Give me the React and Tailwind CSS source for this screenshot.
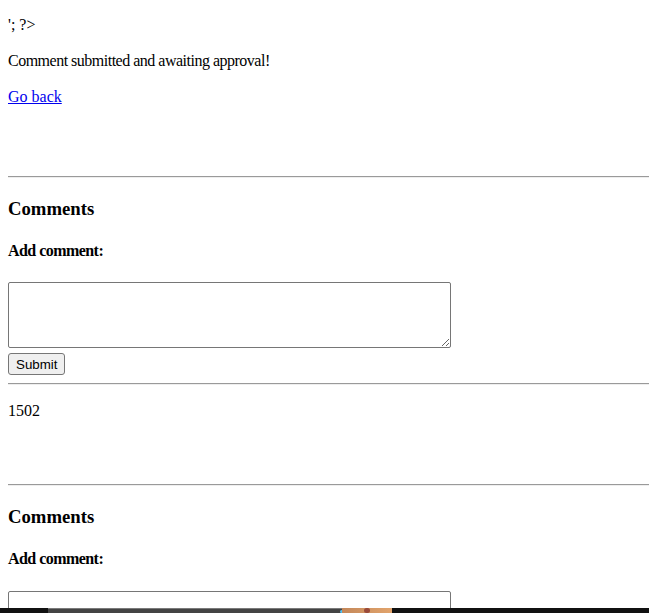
import React from 'react';

// Comment block: heading, form and the rule under it
const CommentSection = () => (
  <div>
    <hr className="my-2 h-0 border-0 border-t border-b border-t-[#9a9a9a] border-b-[#eeeeee]" />
    <h3 className="my-[18.72px] text-[18.72px] font-bold leading-[23px]">Comments</h3>
    <h4 className="my-[21.28px] text-[16px] font-bold leading-[20px] tracking-[-0.55px]">Add comment:</h4>
    <form>
      <textarea
        name="comment"
        className="block w-[443px] h-[66px] border border-[#767676] rounded-[2px] bg-white p-[2px] font-['Liberation_Mono',monospace] text-[13.33px]"
      />
      <div className="pt-[5px]">
        <button
          type="submit"
          className="block h-[22px] px-[7px] bg-[#efefef] border border-[#767676] rounded-[3px] font-['Liberation_Sans',Arial,sans-serif] text-[13.33px] leading-[normal] text-black"
        >
          Submit
        </button>
      </div>
    </form>
    <hr className="mt-2 mb-2 h-0 border-0 border-t border-b border-t-[#9a9a9a] border-b-[#eeeeee]" />
  </div>
);

const App = () => {
  return (
    <div className="min-h-screen bg-white">
      <div className="ml-2 my-2 font-['Liberation_Serif','Times_New_Roman',serif] text-[16px] leading-[20px] text-black">
        <p className="my-4 -translate-y-px">'; ?&gt;</p>
        <p className="my-4 tracking-[-0.5px] -translate-y-px">Comment submitted and awaiting approval!</p>
        <p className="my-4 -translate-y-px">
          <a href="#" className="text-[#0000ee] underline">Go back</a>
        </p>
        <div className="h-[44px]" />

        <CommentSection />

        <p className="my-4">1502</p>
        <div className="h-[39px]" />

        <CommentSection />
      </div>

      {/* Bar along the bottom edge of the window */}
      <div className="fixed bottom-0 left-0 right-0 h-[5px] flex">
        <div className="w-[48px] bg-[#111111]" />
        <div className="w-[294px] bg-[#444444] border-t border-[#7a7a7a] relative">
          <span className="absolute right-[-1px] top-[1px] w-[3px] h-[3px] rounded-full bg-[#4fc3f7]" />
        </div>
        <div className="w-[50px] bg-gradient-to-r from-[#c4885a] to-[#e2a46c] relative">
          <span className="absolute left-[22px] top-[0px] w-[6px] h-[5px] rounded-full bg-[#9a4a3a]" />
        </div>
        <div className="flex-1 bg-[#111111]" />
      </div>
    </div>
  );
};

export default App;
